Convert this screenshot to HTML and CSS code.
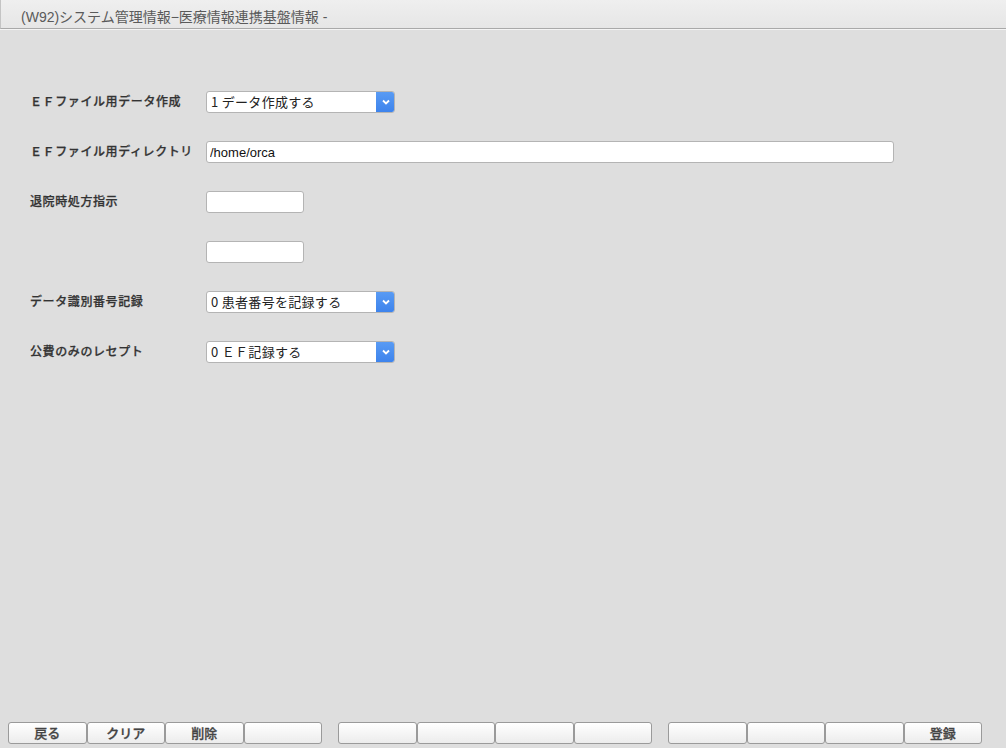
FILE: index.html
```html
<!DOCTYPE html>
<html lang="ja">
<head>
<meta charset="utf-8">
<title>(W92)システム管理情報−医療情報連携基盤情報</title>
<link rel="stylesheet" href="styles.css">
</head>
<body>
<div class="window">
  <header class="titlebar">(W92)システム管理情報−医療情報連携基盤情報 -</header>
  <main class="form">
    <div class="row">
      <label class="label">ＥＦファイル用データ作成</label>
      <div class="select">
        <span class="select-text">1 データ作成する</span>
        <span class="select-btn"><svg width="8" height="6" viewBox="0 0 8 6"><path d="M1 1.5 L4 4.5 L7 1.5" fill="none" stroke="#fff" stroke-width="1.8"/></svg></span>
      </div>
    </div>
    <div class="row">
      <label class="label">ＥＦファイル用ディレクトリ</label>
      <input class="text wide" type="text" value="/home/orca">
    </div>
    <div class="row">
      <label class="label">退院時処方指示</label>
      <input class="text short" type="text" value="">
    </div>
    <div class="row">
      <label class="label"></label>
      <input class="text short" type="text" value="">
    </div>
    <div class="row">
      <label class="label">データ識別番号記録</label>
      <div class="select">
        <span class="select-text">0 患者番号を記録する</span>
        <span class="select-btn"><svg width="8" height="6" viewBox="0 0 8 6"><path d="M1 1.5 L4 4.5 L7 1.5" fill="none" stroke="#fff" stroke-width="1.8"/></svg></span>
      </div>
    </div>
    <div class="row">
      <label class="label">公費のみのレセプト</label>
      <div class="select">
        <span class="select-text">0 ＥＦ記録する</span>
        <span class="select-btn"><svg width="8" height="6" viewBox="0 0 8 6"><path d="M1 1.5 L4 4.5 L7 1.5" fill="none" stroke="#fff" stroke-width="1.8"/></svg></span>
      </div>
    </div>
  </main>
  <footer class="keys">
    <div class="group">
      <button class="key">戻る</button>
      <button class="key">クリア</button>
      <button class="key">削除</button>
      <button class="key"></button>
    </div>
    <div class="group">
      <button class="key"></button>
      <button class="key"></button>
      <button class="key"></button>
      <button class="key"></button>
    </div>
    <div class="group">
      <button class="key"></button>
      <button class="key"></button>
      <button class="key"></button>
      <button class="key">登録</button>
    </div>
  </footer>
</div>
</body>
</html>
```
FILE: styles.css
```css
* { box-sizing: border-box; }

html, body {
  margin: 0;
  padding: 0;
  height: 100%;
}

body {
  background: #dedede;
  font-family: "Noto Sans CJK JP", "Liberation Sans", sans-serif;
  color: #333;
}

.window {
  height: 748px;
  display: flex;
  flex-direction: column;
}

.titlebar {
  height: 29px;
  padding: 6px 0 0 20px;
  font-family: "Liberation Sans", "Noto Sans CJK JP", sans-serif;
  font-size: 14px;
  color: #5a5a5a;
  background: linear-gradient(#efefef, #e6e6e6);
  border-left: 1px solid #c4c4c4;
  border-bottom: 1px solid #a9a9a9;
  box-shadow: 0 1px 0 #f4f4f4;
}

.form {
  flex: 1;
  display: flex;
  flex-direction: column;
  gap: 28px;
  padding: 62px 0 0 30px;
}

.row {
  display: flex;
  align-items: center;
  height: 22px;
}

.label {
  width: 176px;
  font-size: 12px;
  font-weight: 500;
  color: #333;
  letter-spacing: 0.6px;
  margin-top: -3px;
  -webkit-text-stroke: 0.25px #333;
}

.select {
  width: 189px;
  height: 22px;
  display: flex;
  background: #fff;
  border: 1px solid #b4b4b4;
  border-radius: 3px;
  overflow: hidden;
}

.select-text {
  flex: 1;
  padding: 0 0 0 4px;
  font-size: 13px;
  line-height: 20px;
  color: #222;
  letter-spacing: 0.3px;
}

.select-btn {
  width: 19px;
  margin: -1px -1px -1px 0;
  background: linear-gradient(#5a9cf4, #3c82ec);
  border-radius: 0 3px 3px 0;
  display: flex;
  align-items: center;
  justify-content: center;
}

.text {
  height: 22px;
  margin: 0;
  border: 1px solid #b4b4b4;
  border-radius: 3px;
  background: #fff;
  padding: 0 3px;
  font-family: "Liberation Sans", "Noto Sans CJK JP", sans-serif;
  font-size: 13px;
  color: #111;
  outline: none;
}

.wide { width: 688px; }
.short { width: 98px; }

.keys {
  display: flex;
  gap: 16px;
  padding: 0 0 4px 8px;
}

.group {
  display: flex;
}

.key {
  width: 78.5px;
  height: 22px;
  margin: 0;
  padding: 0;
  border: 1px solid #9a9a9a;
  border-radius: 3px;
  background: linear-gradient(#ffffff, #ececec);
  font-family: "Noto Sans CJK JP", sans-serif;
  font-size: 13px;
  font-weight: 500;
  -webkit-text-stroke: 0.3px #444;
  color: #444;
  line-height: 20px;
}
```
